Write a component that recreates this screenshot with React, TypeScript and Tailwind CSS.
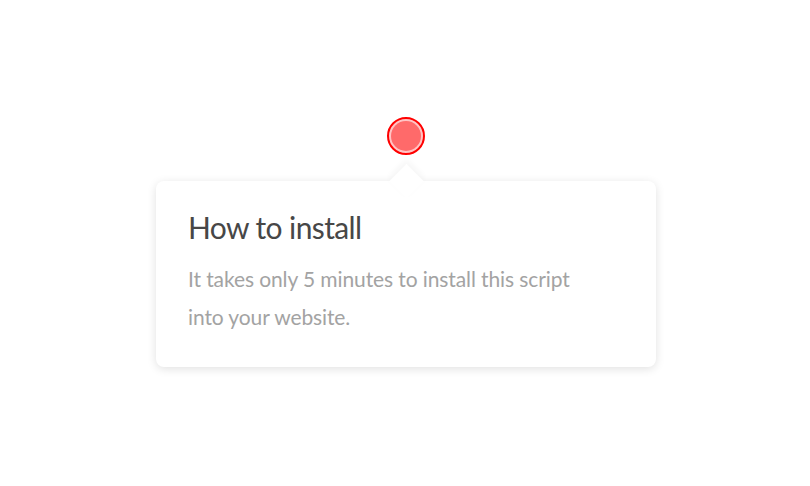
export default function App() {
  return (
    <div className="flex h-[486px] w-[810px] flex-col items-center bg-white pt-[117px] font-['Lato',sans-serif]">
      {/* hotspot */}
      <div className="relative ml-[2px] h-[38px] w-[38px] rounded-full border-2 border-[#ff0000] bg-[#ffc4c4] p-[2px]">
        <div className="h-full w-full rounded-full bg-[#ff6a6a]" />
      </div>

      {/* tooltip */}
      <div className="relative ml-[2px] mt-[26px] w-[500px] rounded-lg bg-white pb-[31px] pl-[32px] pr-[33px] pt-[28px] shadow-[0_2px_10px_rgba(0,0,0,0.12)]">
        <div className="absolute -top-[12px] left-[238px] h-[25px] w-[25px] rotate-45 bg-white shadow-[-3px_-3px_6px_rgba(0,0,0,0.04)]" />
        <div className="relative">
          <h2 className="text-[30px] font-normal leading-[36px] tracking-[-0.6px] text-[#474747]">How to install</h2>
          <p className="mt-[15px] max-w-[400px] text-[21px] leading-[38px] tracking-[-0.1px] text-[#a3a3a3]">
            It takes only 5 minutes to install this script into your website.
          </p>
        </div>
      </div>
    </div>
  );
}
